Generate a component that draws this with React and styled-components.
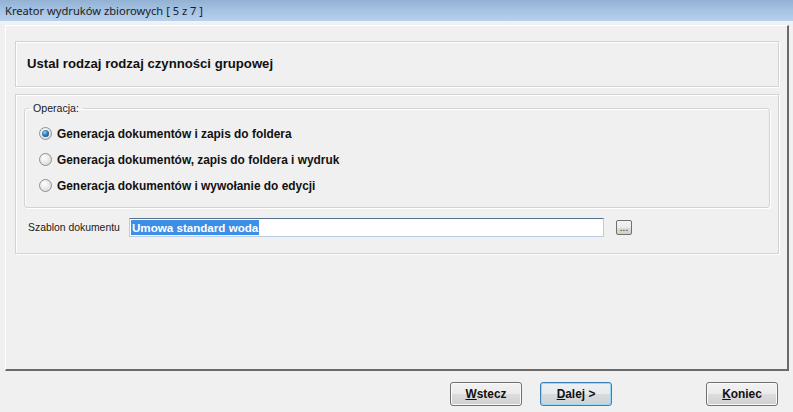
import React, { useState } from 'react';
import styled, { createGlobalStyle, css } from 'styled-components';

const GlobalStyle = createGlobalStyle`
  html, body {
    margin: 0;
    padding: 0;
    background: #f0f0f0;
  }
  body {
    width: 793px;
    height: 412px;
    overflow: hidden;
    font-family: 'Liberation Sans', Arial, sans-serif;
  }
`;

const Window = styled.div`
  width: 793px;
  height: 412px;
  display: flex;
  flex-direction: column;
  background: #f0f0f0;
`;

const TitleBar = styled.div`
  height: 21px;
  flex: 0 0 21px;
  display: flex;
  align-items: center;
  padding-left: 5px;
  background: linear-gradient(to bottom, #93b1d3 0%, #a6c3e3 50%, #b7d1ed 100%);
  border-bottom: 2px solid #eef3f9;
  font-family: 'Noto Sans', 'Open Sans', sans-serif;
  font-size: 11.15px;
  color: #1b1b1b;
`;

const Frame = styled.div`
  box-sizing: border-box;
  height: 346px;
  margin: 2px 4px 0 5px;
  padding: 15px 8px 0 9px;
  border-top: 1px solid #ffffff;
  border-left: 1px solid #ffffff;
  border-right: 2px solid #6a6a6a;
  border-bottom: 2px solid #6a6a6a;
  display: flex;
  flex-direction: column;
  gap: 7px;
`;

const Panel = styled.div`
  box-sizing: border-box;
  border: 1px solid #d3d3d3;
  box-shadow: inset 1px 1px 0 #ffffff, 1px 1px 0 #ffffff;
  height: ${p => p.$h}px;
  ${p => p.$pad && css`padding: ${p.$pad};`}
`;

const HeaderTitle = styled.div`
  height: 100%;
  display: flex;
  align-items: center;
  padding-left: 11px;
  padding-bottom: 2px;
  box-sizing: border-box;
  font-weight: bold;
  font-size: 13.15px;
  color: #111;
`;

const GroupBox = styled.fieldset`
  box-sizing: border-box;
  margin: 0;
  height: 106px;
  padding: 0;
  border: 1px solid #d3d3d3;
  border-radius: 3px;
  box-shadow: inset 1px 1px 0 #ffffff, 1px 1px 0 #ffffff;
`;

const Legend = styled.legend`
  margin-left: 4px;
  padding: 0 4px;
  font-size: 10.6px;
  color: #1a1a1a;
`;

const RadioList = styled.div`
  display: flex;
  flex-direction: column;
  gap: 9px;
  padding: 11px 0 0 14px;
`;

const RadioRow = styled.label`
  display: flex;
  align-items: center;
  gap: 5px;
  height: 17px;
  cursor: pointer;
  font-size: 11.9px;
  font-weight: bold;
  color: #111;
`;

const RadioDot = styled.span`
  width: 13px;
  height: 13px;
  box-sizing: border-box;
  border-radius: 50%;
  border: 1px solid #8f9092;
  background: radial-gradient(circle at 40% 35%, #ffffff 0%, #e6e6e6 55%, #cfcfcf 100%);
  display: flex;
  align-items: center;
  justify-content: center;
  ${p => p.$on && css`
    &::after {
      content: '';
      width: 7px;
      height: 7px;
      border-radius: 50%;
      background: radial-gradient(circle at 40% 35%, #8fd0f5 0%, #2a73b5 50%, #0f3e6e 100%);
    }
  `}
`;

const FieldRow = styled.div`
  display: flex;
  align-items: center;
  height: 19px;
  margin-top: 10px;
  padding-left: 4px;
`;

const FieldLabel = styled.span`
  width: 101px;
  flex: 0 0 101px;
  font-size: 10.4px;
  color: #1a1a1a;
`;

const TextBox = styled.div`
  box-sizing: border-box;
  width: 475px;
  height: 19px;
  border: 1px solid #b6cde4;
  border-top-color: #56718b;
  background: #fff;
  display: flex;
  align-items: center;
  padding-left: 1px;
`;

const Selected = styled.span`
  background: #3d8ee6;
  color: #fff;
  font-size: 11.6px;
  font-weight: bold;
  line-height: 15px;
  padding: 0 1px;
`;

const SmallButton = styled.button`
  box-sizing: border-box;
  width: 16px;
  height: 15px;
  margin-left: 12px;
  padding: 0;
  border: 1px solid #707070;
  border-radius: 2px;
  background: linear-gradient(to bottom, #f4f4f4 0%, #ebebeb 50%, #dcdcdc 51%, #d0d0d0 100%);
  font-family: 'Liberation Sans', Arial, sans-serif;
  font-size: 10px;
  line-height: 8px;
  color: #222;
`;

const Footer = styled.div`
  flex: 1;
  display: flex;
  align-items: flex-start;
  justify-content: flex-end;
  padding: 11px 15px 0 0;
`;

const Button = styled.button`
  box-sizing: border-box;
  width: 72px;
  height: 24px;
  margin-left: ${p => p.$gap}px;
  border: 1px solid #707070;
  border-radius: 3px;
  background: linear-gradient(to bottom, #f2f2f2 0%, #ebebeb 50%, #dddddd 51%, #cfcfcf 100%);
  box-shadow: inset 0 0 0 1px #fbfbfb;
  font-family: 'Liberation Sans', Arial, sans-serif;
  font-size: 11.9px;
  font-weight: bold;
  color: #111;
  padding: 0;
  ${p => p.$default && css`
    border-color: #3c7fb1;
    box-shadow: inset 0 0 0 1px #9ad8f6;
    background: linear-gradient(to bottom, #eef1f3 0%, #e6eaed 50%, #d7dcdf 51%, #cbd1d5 100%);
  `}
  u { text-decoration: underline; }
`;

const options = [
  'Generacja dokumentów i zapis do foldera',
  'Generacja dokumentów, zapis do foldera i wydruk',
  'Generacja dokumentów i wywołanie do edycji',
];

export default function App() {
  const [choice, setChoice] = useState(0);

  return (
    <>
      <GlobalStyle />
      <Window>
        <TitleBar>Kreator wydruków zbiorowych [ 5 z 7 ]</TitleBar>
        <Frame>
          <Panel $h={46}>
            <HeaderTitle>Ustal rodzaj rodzaj czynności grupowej</HeaderTitle>
          </Panel>
          <Panel $h={160} $pad="7px 8px 0 8px">
            <GroupBox>
              <Legend>Operacja:</Legend>
              <RadioList>
                {options.map((o, i) => (
                  <RadioRow key={i} onClick={() => setChoice(i)}>
                    <RadioDot $on={choice === i} />
                    {o}
                  </RadioRow>
                ))}
              </RadioList>
            </GroupBox>
            <FieldRow>
              <FieldLabel>Szablon dokumentu</FieldLabel>
              <TextBox>
                <Selected>Umowa standard woda</Selected>
              </TextBox>
              <SmallButton>...</SmallButton>
            </FieldRow>
          </Panel>
        </Frame>
        <Footer>
          <Button $gap={0}><u>W</u>stecz</Button>
          <Button $gap={18} $default><u>D</u>alej &gt;</Button>
          <Button $gap={94}><u>K</u>oniec</Button>
        </Footer>
      </Window>
    </>
  );
}
